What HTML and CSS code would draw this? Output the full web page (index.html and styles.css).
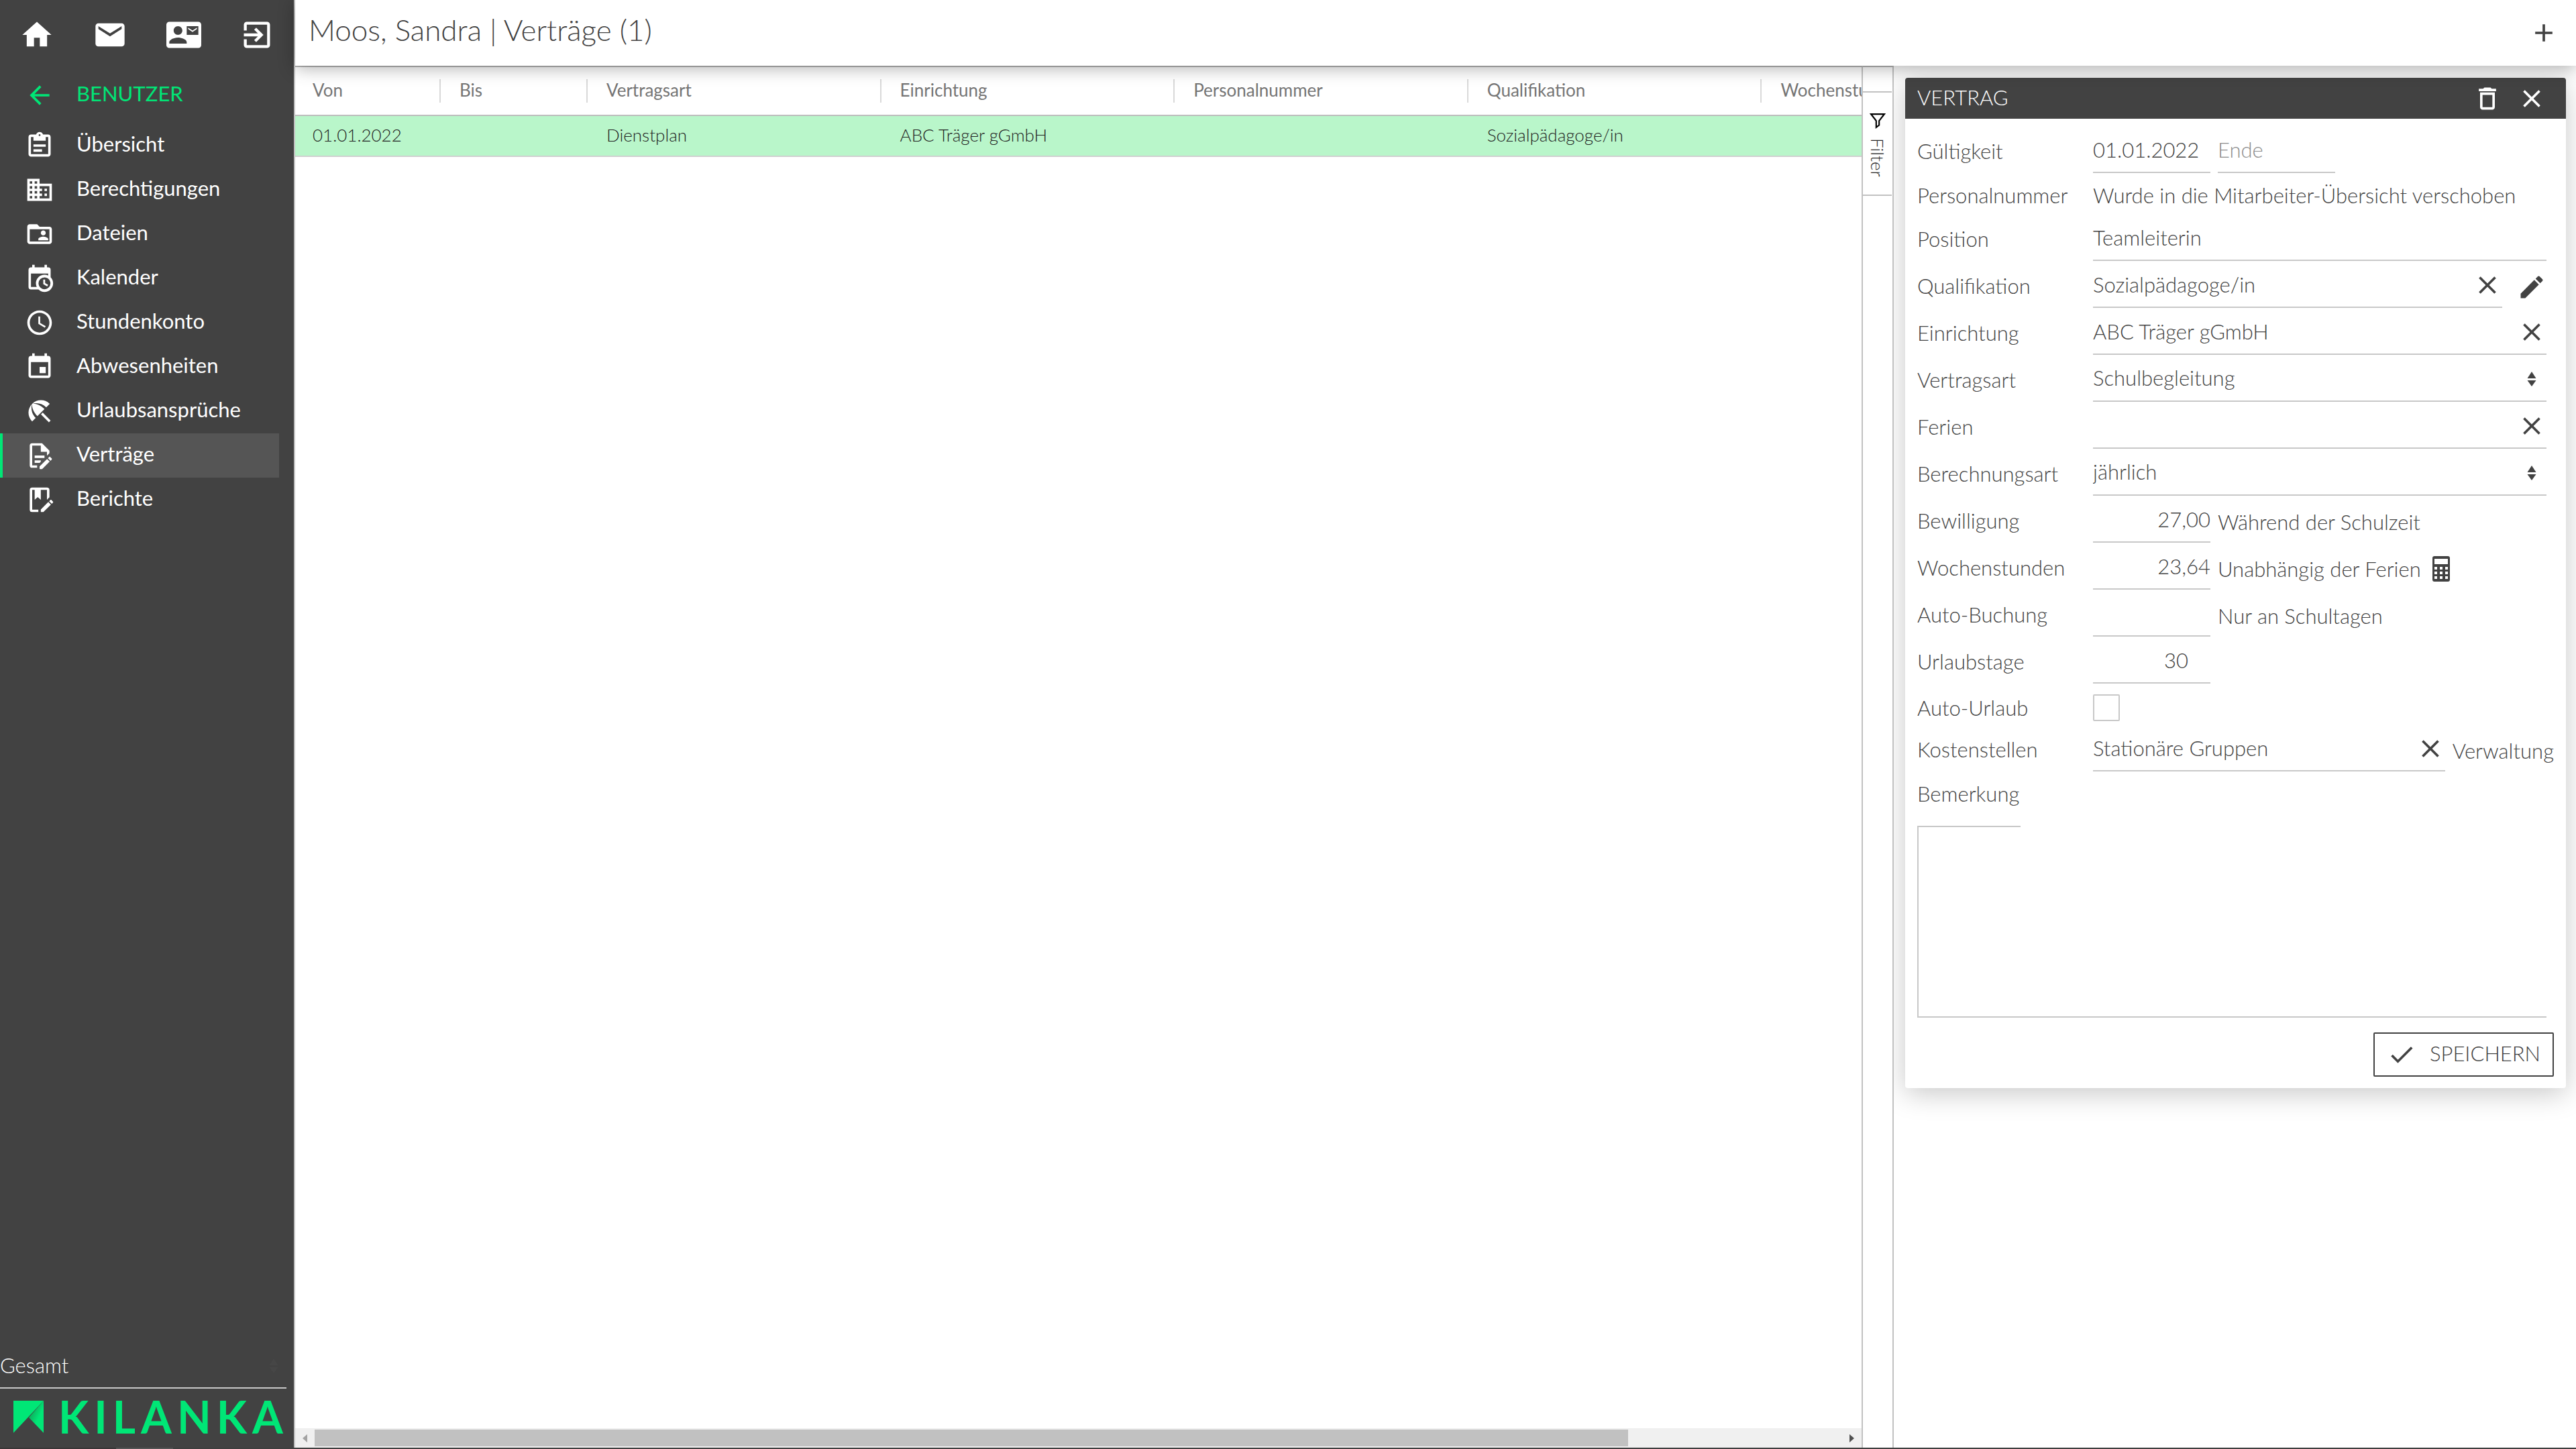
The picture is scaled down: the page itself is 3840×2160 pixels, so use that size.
FILE: index.html
```html
<!DOCTYPE html>
<html lang="de">
<head>
<meta charset="utf-8">
<title>Moos, Sandra | Verträge</title>
<link rel="stylesheet" href="styles.css">
</head>
<body>
<svg class="defs" aria-hidden="true">
  <symbol id="i-close" viewBox="0 0 24 24"><path d="M19 6.41 17.59 5 12 10.59 6.41 5 5 6.41 10.59 12 5 17.59 6.41 19 12 13.41 17.59 19 19 17.59 13.41 12z"/></symbol>
  <symbol id="i-sort" viewBox="0 0 14 24"><path d="M7 1 13.500 11H.5zM7 23 .5 14h13z"/></symbol>
</svg>
<div class="app">
  <aside class="sidebar">
    <nav class="quick" aria-label="Schnellzugriff">
      <a href="#start" aria-label="Start"><svg viewBox="0 0 24 24"><path d="M10 20v-6h4v6h5v-8h3L12 3 2 12h3v8z"/></svg></a>
      <a href="#post" aria-label="Nachrichten"><svg viewBox="0 0 24 24"><path d="M20 4H4c-1.100 0-1.990.9-1.990 2L2 18c0 1.100.9 2 2 2h16c1.100 0 2-.9 2-2V6c0-1.100-.9-2-2-2zm0 4-8 5-8-5V6l8 5 8-5v2z"/></svg></a>
      <a href="#kontakte" aria-label="Kontakte"><svg viewBox="0 0 24 24"><path d="M21 8V7l-3 2-3-2v1l3 2 3-2zm1-5H2C.9 3 0 3.900 0 5v14c0 1.100.9 2 2 2h20c1.100 0 1.990-.9 1.990-2L24 5c0-1.100-.9-2-2-2zM8 6c1.660 0 3 1.340 3 3s-1.340 3-3 3-3-1.340-3-3 1.340-3 3-3zm6 12H2v-1c0-2 4-3.100 6-3.100s6 1.100 6 3.100v1zm8-6h-8V6h8v6z"/></svg></a>
      <a href="#abmelden" aria-label="Abmelden"><svg viewBox="0 0 24 24"><path d="M10.090 15.590 11.500 17l5-5-5-5-1.410 1.410L12.670 11H3v2h9.670l-2.580 2.590zM19 3H5c-1.110 0-2 .9-2 2v4h2V5h14v14H5v-4H3v4c0 1.100.89 2 2 2h14c1.100 0 2-.9 2-2V5c0-1.100-.9-2-2-2z"/></svg></a>
    </nav>
    <a class="back" href="#benutzer"><svg viewBox="0 0 24 24"><path d="M20 11H7.830l5.590-5.590L12 4l-8 8 8 8 1.410-1.410L7.830 13H20v-2z"/></svg><span>BENUTZER</span></a>
    <nav class="menu" aria-label="Benutzer">
      <a href="#uebersicht"><svg viewBox="0 0 24 24"><path d="M7 15h7v2H7zm0-4h10v2H7zm12-8h-4.180C14.400 1.840 13.300 1 12 1s-2.400.84-2.820 2H5c-1.100 0-2 .9-2 2v14c0 1.100.9 2 2 2h14c1.100 0 2-.9 2-2V5c0-1.100-.9-2-2-2zm-7-.25c.41 0 .75.34.75.75s-.34.75-.75.75-.75-.34-.75-.75.34-.75.75-.75zM19 19H5V5h2v3h10V5h2v14z"/></svg><span>Übersicht</span></a>
      <a href="#berechtigungen"><svg viewBox="0 0 24 24"><path d="M12 7V3H2v18h20V7H12zM6 19H4v-2h2v2zm0-4H4v-2h2v2zm0-4H4V9h2v2zm0-4H4V5h2v2zm4 12H8v-2h2v2zm0-4H8v-2h2v2zm0-4H8V9h2v2zm0-4H8V5h2v2zm10 12h-8v-2h2v-2h-2v-2h2v-2h-2V9h8v10zm-2-8h-2v2h2v-2zm0 4h-2v2h2v-2z"/></svg><span>Berechtigungen</span></a>
      <a href="#dateien"><svg viewBox="0 0 24 24"><path d="M20 6h-8l-2-2H4c-1.100 0-2 .9-2 2v12c0 1.100.9 2 2 2h16c1.100 0 2-.9 2-2V8c0-1.100-.9-2-2-2zm0 12H4V8h16v10zm-5-5c1.100 0 2-.9 2-2s-.9-2-2-2-2 .9-2 2 .9 2 2 2zm-4 4h8v-1c0-1.330-2.670-2-4-2s-4 .67-4 2v1z"/></svg><span>Dateien</span></a>
      <a href="#kalender"><svg viewBox="0 0 24 24"><path d="M15 13h1.500v2.820l2.440 1.410-.75 1.300L15 16.690V13m4-5H5v11h4.670c-.43-.91-.67-1.930-.67-3a7 7 0 0 1 7-7c1.070 0 2.090.24 3 .67V8M5 21a2 2 0 0 1-2-2V5c0-1.110.89-2 2-2h1V1h2v2h8V1h2v2h1a2 2 0 0 1 2 2v6.100c1.240 1.260 2 2.990 2 4.900a7 7 0 0 1-7 7c-1.910 0-3.640-.76-4.900-2H5m11-9.850A4.850 4.850 0 0 0 11.150 16c0 2.680 2.170 4.850 4.850 4.850A4.850 4.850 0 0 0 20.850 16c0-2.680-2.170-4.850-4.850-4.850z"/></svg><span>Kalender</span></a>
      <a href="#stundenkonto"><svg viewBox="0 0 24 24"><path d="M11.990 2C6.470 2 2 6.480 2 12s4.470 10 9.990 10C17.520 22 22 17.520 22 12S17.520 2 11.990 2zM12 20c-4.420 0-8-3.580-8-8s3.580-8 8-8 8 3.580 8 8-3.580 8-8 8zm.5-13H11v6l5.250 3.150.75-1.230-4.500-2.670z"/></svg><span>Stundenkonto</span></a>
      <a href="#abwesenheiten"><svg viewBox="0 0 24 24"><path d="M17 12h-5v5h5v-5zM16 1v2H8V1H6v2H5c-1.110 0-1.990.9-1.990 2L3 19c0 1.100.89 2 2 2h14c1.100 0 2-.9 2-2V5c0-1.100-.9-2-2-2h-1V1h-2zm3 18H5V8h14v11z"/></svg><span>Abwesenheiten</span></a>
      <a href="#urlaub"><svg viewBox="0 0 24 24"><path d="m13.127 14.560 1.430-1.430 6.440 6.443L19.570 21zm4.293-5.730 2.860-2.860c-3.950-3.950-10.350-3.960-14.300-.02 3.930-1.300 8.310-.25 11.440 2.880zM5.950 5.980c-3.940 3.950-3.930 10.350.02 14.300l2.860-2.860C5.700 14.290 4.650 9.910 5.950 5.980zm.02-.02-.01.010c-.38 3.010 1.170 6.880 4.300 10.020l5.730-5.730c-3.130-3.130-7.010-4.680-10.020-4.300z"/></svg><span>Urlaubsansprüche</span></a>
      <a class="active" href="#vertraege" aria-current="page"><svg viewBox="0 0 24 24"><path d="M8 12h8v2H8v-2m2 8H6V4h7v5h5v3.100l2-2V8l-6-6H6a2 2 0 0 0-2 2v16a2 2 0 0 0 2 2h4v-2m-2-2h4.100l.9-.9V16H8v2m12.200-5c.1 0 .3.1.4.2l1.300 1.300c.2.2.2.6 0 .8l-1 1-2.100-2.100 1-1c.1-.1.200-.2.400-.2m0 3.900L14.100 23H12v-2.100l6.100-6.100 2.100 2.100z"/></svg><span>Verträge</span></a>
      <a href="#berichte"><svg viewBox="0 0 24 24"><path d="M6 2a2 2 0 0 0-2 2v16a2 2 0 0 0 2 2h5v-2H6V4h2v8l2.500-2.250L13 12V4h5v8l2-2V4a2 2 0 0 0-2-2H6m15.200 10c.1 0 .3.1.4.2l1.300 1.300c.2.2.2.6 0 .8l-1 1-2.100-2.100 1-1c.1-.1.200-.2.400-.2m0 3.900L15.100 22H13v-2.100l6.100-6.100 2.100 2.100z"/></svg><span>Berichte</span></a>
    </nav>
    <div class="scope">
      <select aria-label="Bereich"><option>Gesamt</option></select>
      <svg class="sort"><use href="#i-sort"/></svg>
    </div>
    <a class="brand" href="#kilanka">
      <svg viewBox="0 0 45 48"><defs><linearGradient id="fold" x1="0" y1="0" x2="1" y2="1"><stop offset=".15" stop-color="#149a55"/><stop offset=".6" stop-color="#00e676"/></linearGradient></defs><path d="M0 0h45L0 48z" fill="#00e676"/><path d="M45 0v48L23 25z" fill="url(#fold)"/></svg>
      <span>KILANKA</span>
    </a>
  </aside>
  <div class="page">
    <header class="topbar">
      <h1>Moos, Sandra | Verträge (1)</h1>
      <button class="icon" type="button" aria-label="Neuer Vertrag"><svg viewBox="0 0 24 24"><path d="M19 13h-6v6h-2v-6H5v-2h6V5h2v6h6v2z"/></svg></button>
    </header>
    <main class="content">
      <section class="list">
        <div class="tablewrap">
          <table>
            <colgroup><col class="c-first"><col class="c-date"><col><col><col><col><col></colgroup>
            <thead><tr><th>Von</th><th>Bis</th><th>Vertragsart</th><th>Einrichtung</th><th>Personalnummer</th><th>Qualifikation</th><th>Wochenstunden</th></tr></thead>
            <tbody><tr><td>01.01.2022</td><td></td><td>Dienstplan</td><td>ABC Träger gGmbH</td><td></td><td>Sozialpädagoge/in</td><td></td></tr></tbody>
          </table>
        </div>
        <div class="hscroll" aria-hidden="true"><svg viewBox="0 0 8 14"><path d="M8 0v14L0 7z"/></svg><div class="track"><div class="thumb"></div></div><svg class="end" viewBox="0 0 8 14"><path d="M0 0v14l8-7z"/></svg></div>
      </section>
      <div class="filterbar">
        <button class="filter" type="button"><svg viewBox="0 0 22 22"><path d="M2 2h18L13 11v6l-4 3v-9z"/></svg><span>Filter</span></button>
      </div>
      <aside class="side">
        <form class="card">
          <div class="cardhead">
            <h2>VERTRAG</h2>
            <button class="icon" type="button" aria-label="Löschen"><svg viewBox="0 0 24 24"><path d="M6 19c0 1.100.9 2 2 2h8c1.100 0 2-.9 2-2V7H6v12zM8 9h8v10H8V9zm7.500-5-1-1h-5l-1 1H5v2h14V4z"/></svg></button>
            <button class="icon" type="button" aria-label="Schließen"><svg><use href="#i-close"/></svg></button>
          </div>
          <div class="rows">
            <div class="row"><label for="von">Gültigkeit</label><input class="short" id="von" value="01.01.2022"><input class="short" id="bis" placeholder="Ende" aria-label="Ende"></div>
            <div class="row info"><span class="cap">Personalnummer</span><span>Wurde in die Mitarbeiter-Übersicht verschoben</span></div>
            <div class="row"><label for="pos">Position</label><input id="pos" value="Teamleiterin"></div>
            <div class="row"><label for="qual">Qualifikation</label><div class="field"><input id="qual" value="Sozialpädagoge/in"><button class="icon" type="button" aria-label="Leeren"><svg><use href="#i-close"/></svg></button></div><button class="icon edit" type="button" aria-label="Bearbeiten"><svg viewBox="0 0 24 24"><path d="M3 17.250V21h3.750L17.810 9.940l-3.750-3.750L3 17.250zM20.710 7.040c.39-.39.39-1.020 0-1.410l-2.340-2.340c-.39-.39-1.020-.39-1.410 0l-1.830 1.830 3.750 3.750 1.830-1.830z"/></svg></button></div>
            <div class="row"><label for="einr">Einrichtung</label><div class="field"><input id="einr" value="ABC Träger gGmbH"><button class="icon" type="button" aria-label="Leeren"><svg><use href="#i-close"/></svg></button></div></div>
            <div class="row"><label for="art">Vertragsart</label><div class="field"><select id="art"><option>Schulbegleitung</option></select><svg class="sort"><use href="#i-sort"/></svg></div></div>
            <div class="row"><label for="ferien">Ferien</label><div class="field"><input id="ferien"><button class="icon" type="button" aria-label="Leeren"><svg><use href="#i-close"/></svg></button></div></div>
            <div class="row"><label for="ber">Berechnungsart</label><div class="field"><select id="ber"><option>jährlich</option></select><svg class="sort"><use href="#i-sort"/></svg></div></div>
            <div class="row"><label for="bew">Bewilligung</label><input class="short num" id="bew" value="27,00"><span>Während der Schulzeit</span></div>
            <div class="row"><label for="wo">Wochenstunden</label><input class="short num" id="wo" value="23,64"><span>Unabhängig der Ferien</span><button class="calc" type="button" aria-label="Berechnen"><svg viewBox="0 0 26 38"><path fill-rule="evenodd" d="M3 0h20q3 0 3 3v32q0 3-3 3H3q-3 0-3-3V3q0-3 3-3zM3 4v8h20V4zM3 16v4h4v-4zm8 0v4h4v-4zm8 0v4h4v-4zM3 23v4h4v-4zm8 0v4h4v-4zm8 0v4h4v-4zM3 30v4h4v-4zm8 0v4h4v-4zm8 0v4h4v-4z"/></svg></button></div>
            <div class="row"><label for="auto">Auto-Buchung</label><input class="short num" id="auto"><span>Nur an Schultagen</span></div>
            <div class="row"><label for="tage">Urlaubstage</label><input class="short num spin" id="tage" value="30"></div>
            <div class="row info check"><label for="au">Auto-Urlaub</label><input type="checkbox" id="au"></div>
            <div class="row cost"><label for="ks">Kostenstellen</label><div class="field"><input id="ks" value="Stationäre Gruppen"><button class="icon" type="button" aria-label="Leeren"><svg><use href="#i-close"/></svg></button></div><span>Verwaltung</span></div>
            <div class="note"><label for="bem">Bemerkung</label><textarea id="bem"></textarea></div>
          </div>
          <button class="save" type="submit"><svg viewBox="0 0 24 24"><path d="M9 16.170 4.830 12l-1.420 1.410L9 19 21 7l-1.410-1.410z"/></svg><span>SPEICHERN</span></button>
        </form>
      </aside>
    </main>
  </div>
</div>
<footer class="taskbar"></footer>
</body>
</html>
```
FILE: styles.css
```css
* { box-sizing: border-box; }
html, body { height: 100%; }
body {
  margin: 0;
  display: flex;
  flex-direction: column;
  background: #fff;
  color: #424242;
  font: 300 31px/38px Lato, "Noto Sans", sans-serif;
}
.defs { position: absolute; width: 0; height: 0; }
svg { display: block; fill: currentColor; flex: none; }
a { color: inherit; text-decoration: none; }
h1, h2 { margin: 0; font-weight: 300; }
button, input, select, textarea {
  font: inherit;
  color: inherit;
  margin: 0;
  padding: 0;
  border: 0;
  border-radius: 0;
  background: none;
  outline: 0;
}
select { appearance: none; }
.icon svg { width: 44px; height: 44px; }
.sort { width: 14px; height: 24px; }

.app { flex: 1; min-height: 0; display: flex; }
.taskbar { height: 2px; background: linear-gradient(90deg, #3a3637 173px, #555 173px, #555 258px, #3f3f3f 258px); }

/* sidebar */
.sidebar {
  flex: none;
  width: 440px;
  display: flex;
  flex-direction: column;
  background: #424242;
  color: #fff;
  border-right: 2px solid #c1c1c1;
}
.quick { display: grid; grid-template-columns: repeat(4, 1fr); justify-items: center; padding-top: 26px; }
.quick svg { width: 52px; height: 52px; }
.back, .menu a { display: flex; align-items: center; gap: 33px; font-weight: 400; }
.back svg, .menu svg { width: 44px; height: 44px; }
.back span, .menu span { padding-bottom: 6px; }
.back { height: 66px; margin: 31px 0 9px; padding-left: 37px; color: #00e676; }
.menu a { height: 66px; margin-right: 22px; padding-left: 33px; border-left: 4px solid transparent; }
.menu a.active { background: #555; border-left-color: #00e676; }
.scope {
  display: flex;
  align-items: center;
  margin-top: auto;
  margin-right: 11px;
  padding-right: 12px;
  height: 66px;
  border-bottom: 2px solid #c8c8c8;
}
.scope select { flex: 1; padding-bottom: 2px; }
.scope .sort { color: #464646; }
.brand { display: flex; align-items: center; gap: 22px; padding-left: 20px; height: 88px; color: #00e676; }
.brand svg { width: 45px; height: 48px; margin-bottom: 4px; }
.brand span { padding-bottom: 4px; font-size: 66px; line-height: 80px; font-weight: 700; letter-spacing: 8px; }

/* page */
.page { flex: 1; min-width: 0; display: flex; flex-direction: column; }
.topbar {
  z-index: 1;
  display: flex;
  justify-content: space-between;
  align-items: center;
  height: 98px;
  padding: 0 26px 0 20px;
  background: #fff;
  box-shadow: 0 4px 24px rgba(0, 0, 0, .3);
}
.topbar h1 { font-size: 44px; line-height: 52px; padding-bottom: 10px; }
.content { flex: 1; min-height: 0; display: flex; }

/* list */
.list { flex: 1; min-width: 0; display: flex; flex-direction: column; border-top: 2px solid #b4b4b4; border-right: 2px solid #c1c1c1; }
.tablewrap { flex: 1; overflow: hidden; }
table { table-layout: fixed; width: 2624px; border-collapse: separate; border-spacing: 0; font-size: 26px; line-height: 32px; }
.c-first { width: 217px; }
.c-date { width: 219px; }
th, td { text-align: left; padding: 0 0 0 28px; white-space: nowrap; }
th:first-child, td:first-child { padding-left: 26px; }
th {
  height: 73px;
  padding-bottom: 4px;
  color: #757575;
  font-weight: 400;
  border-bottom: 2px solid #bdbdbd;
  background: linear-gradient(#d9d9d9, #d9d9d9) right 0 top 18px / 2px 35px no-repeat;
}
td { height: 61px; padding-bottom: 3px; color: #222; background: #b9f6ca; border-bottom: 2px solid #d0d0d0; }
.hscroll { display: flex; align-items: center; height: 29px; padding: 0 11px; background: #f0f0f0; color: #a3a3a3; gap: 11px; }
.hscroll svg { width: 7px; height: 14px; }
.hscroll .end { color: #505050; }
.track { flex: 1; }
.thumb { width: 86%; height: 25px; background: #c1c1c1; }

.filterbar { flex: none; width: 46px; border-top: 2px solid #b4b4b4; border-right: 2px solid #c1c1c1; }
.filter {
  display: flex;
  align-items: center;
  width: 43px;
  height: 156px;
  margin-top: 36px;
  padding-top: 30px;
  writing-mode: vertical-rl;
  border-top: 2px solid #c1c1c1;
  border-bottom: 2px solid #c1c1c1;
  font-size: 26px;
  line-height: 32px;
  gap: 14px;
  color: #222;
}
.filter svg { width: 24px; height: 24px; fill: none; stroke: #000; stroke-width: 2; }

/* contract card */
.side { flex: none; width: 1017px; padding: 18px 15px 0 17px; overflow: hidden; }
.card { padding-bottom: 17px; background: #fff; border-radius: 4px; box-shadow: 0 8px 40px rgba(0, 0, 0, .22); }
.cardhead {
  display: flex;
  align-items: center;
  gap: 22px;
  height: 61px;
  padding: 0 29px 0 18px;
  border-radius: 4px 4px 0 0;
  background: #424242;
  color: #fff;
}
.cardhead h2 { flex: 1; font-size: 31px; line-height: 38px; padding-bottom: 4px; }
.rows { padding: 15px 29px 0 18px; }
.row { display: flex; height: 70px; gap: 11px; line-height: 70px; white-space: nowrap; }
.row label, .row .cap { flex: none; width: 251px; line-height: 66px; }
.row input, .row select { min-width: 0; height: 66px; padding-bottom: 3px; border-bottom: 2px solid #c8c8c8; }
.row > input, .field { flex: 1; }
.row > .short { flex: none; width: 175px; }
.num { text-align: right; }
.spin { padding-right: 33px; }
.row > .edit { margin-left: 11px; }
.row input::placeholder { color: #8c8c8c; opacity: 1; }
.field { display: flex; align-items: center; height: 66px; border-bottom: 2px solid #c8c8c8; min-width: 0; }
.field input, .field select { flex: 1; border: 0; height: 64px; }
.field select { line-height: 38px; padding-bottom: 4px; }
.field .sort { margin-right: 15px; }
.row.info { height: 61px; line-height: 58px; }
.row.info .cap, .row.info label { line-height: 58px; }
.row.check { align-items: center; padding-top: 3px; }
.row input[type="checkbox"] { appearance: none; flex: none; width: 40px; height: 40px; padding: 0; border: 2px solid #c8c8c8; border-radius: 2px; }
.cost { margin-right: -11px; }
.calc { padding-left: 6px; }
.calc svg { width: 26px; height: 38px; }
.note label { display: block; width: 154px; height: 79px; line-height: 58px; border-bottom: 2px solid #c8c8c8; }
.note textarea { display: block; width: 100%; height: 284px; border: solid #c8c8c8; border-width: 0 0 2px 2px; resize: none; }
.save {
  display: flex;
  align-items: center;
  gap: 20px;
  height: 66px;
  margin: 22px 18px 0 auto;
  padding: 0 18px;
  border: 2px solid #424242;
  border-radius: 2px;
}
.save svg { width: 44px; height: 44px; }
.save span { padding-bottom: 4px; }
```
